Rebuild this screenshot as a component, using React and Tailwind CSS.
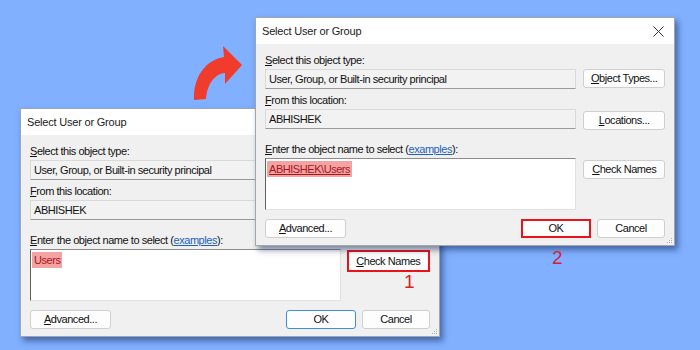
import React from "react";

const Btn = ({ children, w, red, def, className = "" }) => (
  <div
    className={`h-[19px] flex items-center justify-center bg-[#fdfdfd] ${w} ${
      red
        ? "border-2 border-[#e8141c]"
        : def
        ? "border border-[#3d8ed8] rounded-[3px]"
        : "border border-[#cfcfcf] rounded-[3px]"
    } ${className}`}
  >
    {children}
  </div>
);

const Dialog = ({ value, underline, mark }) => (
  <div className="w-[420px] h-[229px] flex flex-col bg-[#f0f0f0] border border-[#9fa6b0] shadow-[3px_4px_6px_rgba(10,30,80,0.5)] relative">
    {/* title bar */}
    <div className="h-[26px] bg-white flex items-center justify-between pl-[6px] pr-[10px]">
      <span className="text-[11px] tracking-[-0.2px] text-[#1a1a1a]">Select User or Group</span>
      <svg width="11" height="11" viewBox="0 0 11 11">
        <path d="M0.5 0.5 L10.5 10.5 M10.5 0.5 L0.5 10.5" stroke="#333" strokeWidth="1" />
      </svg>
    </div>

    <div className="flex-1 px-[9px] pt-[9px] text-[11px] tracking-[-0.45px] text-[#111]">
      <div className="h-[14px] leading-[14px]">
        <u>S</u>elect this object type:
      </div>
      <div className="mt-[2px] flex gap-[7px]">
        <div className="w-[313px] h-[20px] flex items-center px-[3px] bg-[#f2f2f2] border border-[#d9d9d9] border-b-[#9a9a9a]">
          User, Group, or Built-in security principal
        </div>
        <Btn w="w-[82px]">
          <span>
            <u>O</u>bject Types...
          </span>
        </Btn>
      </div>

      <div className="mt-[4px] h-[14px] leading-[14px]">
        <u>F</u>rom this location:
      </div>
      <div className="mt-[2px] flex gap-[7px] items-start">
        <div className="w-[313px] h-[20px] flex items-center px-[3px] bg-[#f2f2f2] border border-[#d9d9d9] border-b-[#9a9a9a]">
          ABHISHEK
        </div>
        <Btn w="w-[82px]" className="mt-[2px]">
          <span>
            <u>L</u>ocations...
          </span>
        </Btn>
      </div>

      <div className="mt-[12px] h-[14px] leading-[14px]">
        <u>E</u>nter the object name to select (
        <span className="text-[#2060c0] underline">examples</span>):
      </div>
      <div className="mt-[2px] flex gap-[7px] items-start">
        <div className="w-[313px] h-[52px] bg-white border border-[#e2e2e2] border-t-[#8c8c8c] border-l-[#606060] pt-[2px] pl-[1px]">
          <span
            className={`inline-block px-[2px] leading-[16px] bg-[#f4a3a3] text-[#a8141c] ${
              underline ? "underline" : ""
            }`}
          >
            {value}
          </span>
        </div>
        {mark === "check" ? (
          <Btn w="w-[84px]" red className="h-[22px] mt-[1px] -ml-[1px]">
            <span>
              <u>C</u>heck Names
            </span>
          </Btn>
        ) : (
          <Btn w="w-[82px]" className="mt-[2px]">
            <span>
              <u>C</u>heck Names
            </span>
          </Btn>
        )}
      </div>

      <div className="mt-[9px] flex items-center">
        <Btn w="w-[81px]">
          <span>
            <u>A</u>dvanced...
          </span>
        </Btn>
        <Btn w="w-[70px]" red={mark === "ok"} def={mark !== "ok"} className="ml-auto">
          OK
        </Btn>
        <Btn w="w-[68px]" className="ml-[6px]">
          Cancel
        </Btn>
      </div>
    </div>

    {/* resize grip */}
    <svg className="absolute right-[1px] bottom-[1px]" width="7" height="7" viewBox="0 0 7 7">
      <g fill="#b0b0b0">
        <rect x="5" y="1" width="1" height="1" />
        <rect x="3" y="3" width="1" height="1" />
        <rect x="5" y="3" width="1" height="1" />
        <rect x="1" y="5" width="1" height="1" />
        <rect x="3" y="5" width="1" height="1" />
        <rect x="5" y="5" width="1" height="1" />
      </g>
    </svg>
  </div>
);

export default function App() {
  return (
    <div
      className="relative w-[700px] h-[350px] overflow-hidden bg-[#80b0ff]"
      style={{ fontFamily: '"Liberation Sans", Arial, sans-serif' }}
    >
      <div className="absolute left-[20px] top-[108px]">
        <Dialog value="Users" mark="check" />
      </div>

      <svg className="absolute left-[185px] top-[40px]" width="62" height="65" viewBox="185 40 62 65">
        <path
          d="M194 100 C 193 78, 205 60, 224 57 L 223 46 L 242 65 L 225 84 L 225 73 C 214 74, 207 85, 206 99 Z"
          fill="#f03c2c"
        />
      </svg>

      <div className="absolute left-[255px] top-[17px]">
        <Dialog value="ABHISHEK\Users" underline mark="ok" />
      </div>

      <div className="absolute left-[404px] top-[272px] text-[19px] leading-none text-[#e01e24]">1</div>
      <div className="absolute left-[552px] top-[248px] text-[19px] leading-none text-[#d4203c]">2</div>
    </div>
  );
}
